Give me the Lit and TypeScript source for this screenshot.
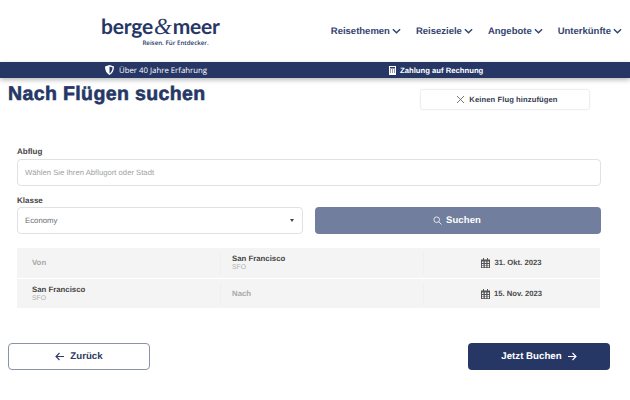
import { LitElement, html, css, svg } from "lit";
import { customElement } from "lit/decorators.js";

const chev = svg`<svg class="chev" width="9" height="7" viewBox="0 0 10 7"><path d="M1 1l4 4 4-4" fill="none" stroke="currentColor" stroke-width="1.6"/></svg>`;
const cal = html`<svg class="cal" width="9" height="10" viewBox="0 0 9 10"><path fill="#555" d="M0 1.5h9V10H0zM2 0h1v2H2zM6 0h1v2H6z"/><path fill="#f4f4f4" d="M1 3.5h1.5V5H1zM3.8 3.5h1.5V5H3.8zM6.5 3.5H8V5H6.5zM1 6h1.5v1.4H1zM3.8 6h1.5v1.4H3.8zM6.5 6H8v1.4H6.5zM1 8h1.5v1.2H1zM3.8 8h1.5v1.2H3.8zM6.5 8H8v1.2H6.5z"/></svg>`;

@customElement("app-root")
export class AppRoot extends LitElement {
  static styles = css`
    :host { display: block; width: 630px; height: 400px; overflow: hidden; background: #fff; font-family: "Liberation Sans", Arial, sans-serif; color: #333; text-rendering: geometricPrecision; }
    .head { height: 62px; display: flex; align-items: center; justify-content: space-between; padding: 0 8px 0 101px; box-sizing: border-box; }
    .logo { display: flex; flex-direction: column; align-items: flex-end; gap: 1px; color: #263766; }
    .brand { font: 700 21px/23px Lato, sans-serif; letter-spacing: -0.2px; white-space: nowrap; }
    .amp { font: italic 400 23px/22px "Liberation Serif", serif; margin: 0 1px; }
    .tag { font: 600 6.2px/8px "Open Sans", sans-serif; margin-right: 11px; white-space: nowrap; }
    .nav { display: flex; gap: 15px; }
    .nav span { display: flex; align-items: center; gap: 2px; padding-top: 1px; font: 700 9.5px/14px "Liberation Sans", sans-serif; color: #34446f; white-space: nowrap; }
    .chev { margin-top: -1px; }
    .band { height: 16px; background: #263766; box-shadow: 0 2px 5px rgba(0,0,0,.28); display: flex; color: #fff; font: 400 7.8px/16px "Open Sans", sans-serif; }
    .band div { display: flex; align-items: center; gap: 5px; }
    .b1 { margin-left: 105px; width: 284px; }
    .b1 span, .b2 span { padding-top: 1px; }
    .b2 { font: 700 7.7px/16px "Liberation Sans", sans-serif; gap: 4px !important; }
    .titlerow { display: flex; justify-content: space-between; align-items: flex-start; padding: 5px 40px 0 8px; height: 68px; box-sizing: border-box; }
    h1 { margin: 0; font: 700 19.5px/22px "Liberation Sans", sans-serif; letter-spacing: .38px; color: #263766; -webkit-text-stroke: 0.6px #263766; }
    .nofl { width: 170px; height: 21px; margin-top: 6px; border: 1px solid #eee; border-radius: 3px; box-sizing: border-box; display: flex; align-items: center; justify-content: center; gap: 4px; font: 700 7.6px/10px "Liberation Sans", sans-serif; letter-spacing: .1px; color: #333c50; padding-left: 4px; box-shadow: 0 0 2px rgba(0,0,0,.05); }
    .form { padding: 1px 29px 0 17px; }
    label { display: block; font: 700 8px/10px "Liberation Sans", sans-serif; color: #444; }
    .input { height: 27px; margin-top: 2px; border: 1px solid #e1e1e1; border-radius: 4px; box-sizing: border-box; display: flex; align-items: center; padding: 0 7px; font: 400 7.7px/10px "Liberation Sans", sans-serif; color: #a2a2a2; }
    .l2 { margin-top: 10px; }
    .cols { display: grid; grid-template-columns: 286px 286px; gap: 12px; margin-top: 1px; }
    .sel { margin: 0; color: #6c6c6c; justify-content: space-between; font-size: 7.8px; }
    .tri { width: 0; height: 0; border: 2.5px solid transparent; border-top: 3px solid #444; border-bottom: 0; margin-right: 1px; }
    .go { height: 27px; background: #717e9e; border-radius: 4px; color: #fff; display: flex; align-items: center; justify-content: center; gap: 4px; font: 700 9.5px/12px "Liberation Sans", sans-serif; letter-spacing: .1px; padding-right: 2px; }
    .go span { padding-top: 1px; }
    .table { margin: 14px 30px 0 17px; display: grid; gap: 1px; }
    .row { height: 30px; background: #f4f4f4; display: grid; grid-template-columns: 203px 203px 177px; align-items: center; }
    .row + .row { height: 29px; }
    .cell { height: 22px; display: flex; flex-direction: column; justify-content: center; padding-left: 15px; box-sizing: border-box; }
    .cell + .cell { border-left: 1px solid #efefef; padding-left: 11px; }
    .muted { font: 700 7.8px/10px "Liberation Sans", sans-serif; color: #a8a8a8; }
    .city { font: 700 7.8px/10px "Liberation Sans", sans-serif; color: #444; }
    .code { font: 400 6.8px/8px "Liberation Sans", sans-serif; color: #b2b2b2; }
    .date { flex-direction: row; align-items: center; justify-content: center; gap: 4px; padding: 0 1px 0 0 !important; font: 700 7.7px/10px "Liberation Sans", sans-serif; color: #4b4b4b; }
    .foot { display: flex; justify-content: space-between; padding: 35px 20px 0 8px; }
    .btn { width: 142px; height: 27px; border-radius: 4px; box-sizing: border-box; display: flex; align-items: center; justify-content: center; gap: 5px; font: 700 9.7px/12px "Liberation Sans", sans-serif; }
    .back { border: 1px solid #8b93a8; color: #2f3c62; }
    .next { background: #263766; color: #fff; }
  `;

  render() {
    return html`
      <div class="head">
        <div class="logo">
          <div class="brand">berge<span class="amp">&amp;</span>meer</div>
          <div class="tag">Reisen. Für Entdecker.</div>
        </div>
        <div class="nav">
          <span>Reisethemen ${chev}</span><span>Reiseziele ${chev}</span><span>Angebote ${chev}</span><span>Unterkünfte ${chev}</span>
        </div>
      </div>
      <div class="band">
        <div class="b1">
          <svg width="9" height="10" viewBox="0 0 9 10"><path fill="#fff" d="M4.5 0L9 1.6C9 5.5 7.5 8.6 4.5 10 1.5 8.6 0 5.5 0 1.6z"/><path fill="#263766" d="M4.5 1.5v7C6.3 7.4 7.4 5.2 7.6 2.6z"/></svg>
          <span>Über 40 Jahre Erfahrung</span>
        </div>
        <div class="b2">
          <svg width="7" height="9" viewBox="0 0 7 9"><path fill="#fff" d="M0 0h7v9H0z"/><path fill="#263766" d="M1 1h5v1.6H1zM1 3.6h1v1H1zM3 3.6h1v1H3zM5 3.6h1v1H5zM1 5.6h1v1H1zM3 5.6h1v1H3zM5 5.6h1v1H5z"/></svg>
          <span>Zahlung auf Rechnung</span>
        </div>
      </div>
      <div class="titlerow">
        <h1>Nach Flügen suchen</h1>
        <div class="nofl">
          <svg width="9" height="9" viewBox="0 0 9 9"><path d="M1 1l7 7M8 1L1 8" stroke="#555" stroke-width=".8" fill="none"/></svg>
          Keinen Flug hinzufügen
        </div>
      </div>
      <div class="form">
        <label>Abflug</label>
        <div class="input">Wählen Sie Ihren Abflugort oder Stadt</div>
        <label class="l2">Klasse</label>
        <div class="cols">
          <div class="input sel">Economy<i class="tri"></i></div>
          <div class="go">
            <svg width="9" height="9" viewBox="0 0 9 9"><circle cx="3.7" cy="3.7" r="2.8" fill="none" stroke="#fff" stroke-width=".8"/><path d="M5.8 5.8L8.5 8.5" stroke="#fff" stroke-width=".8"/></svg>
            <span>Suchen</span>
          </div>
        </div>
      </div>
      <div class="table">
        <div class="row">
          <div class="cell"><span class="muted">Von</span></div>
          <div class="cell"><span class="city">San Francisco</span><span class="code">SFO</span></div>
          <div class="cell date">${cal} 31. Okt. 2023</div>
        </div>
        <div class="row">
          <div class="cell"><span class="city">San Francisco</span><span class="code">SFO</span></div>
          <div class="cell"><span class="muted">Nach</span></div>
          <div class="cell date">${cal} 15. Nov. 2023</div>
        </div>
      </div>
      <div class="foot">
        <div class="btn back">
          <svg width="10" height="9" viewBox="0 0 10 9"><path d="M9 4.5H1.5M4.5 1L1 4.5 4.5 8" fill="none" stroke="currentColor" stroke-width="1.1"/></svg>
          Zurück
        </div>
        <div class="btn next">
          Jetzt Buchen
          <svg width="10" height="9" viewBox="0 0 10 9"><path d="M1 4.5h7.5M5.5 1L9 4.5 5.5 8" fill="none" stroke="currentColor" stroke-width="1.1"/></svg>
        </div>
      </div>
    `;
  }
}
